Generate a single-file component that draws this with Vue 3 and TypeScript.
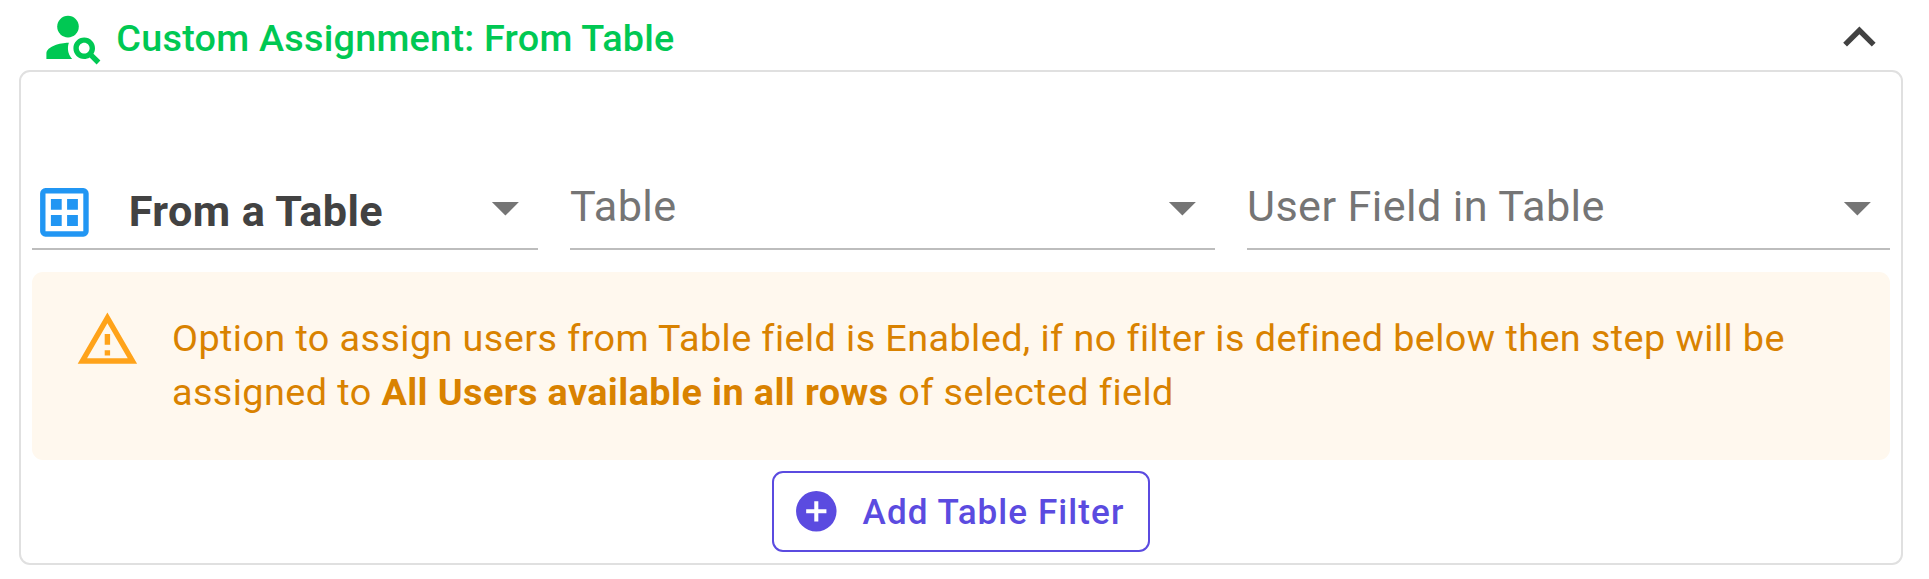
<script setup lang="ts">
interface SelectField {
  id: string
  text: string
  selected: boolean
}

const fields: SelectField[] = [
  { id: 'source', text: 'From a Table', selected: true },
  { id: 'table', text: 'Table', selected: false },
  { id: 'user-field', text: 'User Field in Table', selected: false },
]
</script>

<template>
  <section class="assignment">
    <header class="head">
      <svg class="icon" viewBox="0 0 24 24">
        <circle cx="10" cy="8" r="4" />
        <path d="M10.35 14.01C7.62 13.91 2 15.27 2 18v2h9.54c-2.47-2.76-1.23-5.89-1.19-5.99z" />
        <path d="M19.43 18.02c.36-.59.57-1.28.57-2.02 0-2.21-1.79-4-4-4s-4 1.79-4 4 1.79 4 4 4c.74 0 1.43-.22 2.02-.57L20.59 22 22 20.59l-2.57-2.57zM16 18c-1.1 0-2-.9-2-2s.9-2 2-2 2 .9 2 2-.9 2-2 2z" />
      </svg>
      <h2 class="title">Custom Assignment: From Table</h2>
      <svg class="icon chevron" viewBox="0 0 24 24">
        <path d="M7.41 15.41 12 10.83l4.59 4.58L18 14l-6-6-6 6z" />
      </svg>
    </header>

    <div class="panel">
      <div class="fields">
        <div v-for="field in fields" :key="field.id" class="field" :class="{ selected: field.selected }">
          <svg v-if="field.selected" class="icon table-icon" viewBox="0 0 24 24">
            <path fill-rule="evenodd" d="M5 3h14a2 2 0 0 1 2 2v14a2 2 0 0 1-2 2H5a2 2 0 0 1-2-2V5a2 2 0 0 1 2-2zM5 5v14h14V5z" />
            <path d="M7 7h4v4H7zM13 7h4v4h-4zM7 13h4v4H7zM13 13h4v4h-4z" />
          </svg>
          <span class="value">{{ field.text }}</span>
          <svg class="icon caret" viewBox="0 0 24 24"><path d="M7 10l5 5 5-5z" /></svg>
        </div>
      </div>

      <div class="alert">
        <svg class="icon warn" viewBox="0 0 24 24">
          <path d="M12 5.99 19.53 19H4.47L12 5.99M12 2 1 21h22L12 2zm1 14h-2v2h2v-2zm0-6h-2v4h2v-4z" />
        </svg>
        <p class="message">
          Option to assign users from Table field is Enabled, if no filter is defined below then step will be<br />
          assigned to <b>All Users available in all rows</b> of selected field
        </p>
      </div>

      <button class="add" type="button">
        <svg class="icon plus" viewBox="0 0 24 24">
          <path d="M17 13h-4v4h-2v-4H7v-2h4V7h2v4h4m-5-9a10 10 0 1 0 0 20 10 10 0 0 0 0-20z" />
        </svg>
        <span class="add-text">Add Table Filter</span>
      </button>
    </div>
  </section>
</template>

<style>
body {
  margin: 0;
  background: #fff;
}
</style>

<style scoped>
.assignment {
  box-sizing: border-box;
  width: 1929px;
  height: 579px;
  padding: 0 26px 14px 19px;
  display: flex;
  flex-direction: column;
  background: #fff;
  font-family: Roboto, "Liberation Sans", sans-serif;
}

.icon {
  display: block;
  flex: none;
  width: 64.8px;
  height: 64.8px;
  fill: currentColor;
}

.head {
  box-sizing: border-box;
  height: 70px;
  padding: 5px 11px 0 21.7px;
  display: flex;
  align-items: flex-start;
  color: #00c853;
}

.title {
  flex: 1;
  margin: 0 0 0 10.8px;
  font-size: 37.8px;
  line-height: 66px;
  font-weight: 500;
  letter-spacing: 0.235px;
  white-space: nowrap;
}

.chevron {
  color: #424242;
}

.panel {
  box-sizing: border-box;
  flex: 1;
  padding: 100px 11px 0;
  display: flex;
  flex-direction: column;
  align-items: stretch;
  border: 2px solid #e0e0e0;
  border-radius: 11px;
}

.fields {
  display: grid;
  grid-template-columns: 506px 645px 643px;
  gap: 32px;
}

.field {
  box-sizing: border-box;
  height: 78px;
  display: flex;
  align-items: flex-start;
  border-bottom: 2px solid #bdbdbd;
  color: #757575;
}

.value {
  flex: 1;
  font-size: 43.2px;
  line-height: 70px;
  letter-spacing: 0.405px;
  white-space: nowrap;
}

.selected .value {
  margin: 5px 0 0 32px;
  color: #424242;
  font-weight: 700;
}

.table-icon {
  margin-top: 8px;
  color: #2196f3;
}

.caret {
  margin: 3px 0 0;
}

.alert {
  box-sizing: border-box;
  height: 188px;
  margin-top: 22px;
  padding: 34.6px 0 0 42.8px;
  display: flex;
  align-items: flex-start;
  border-radius: 11px;
  background: #fff8ee;
  color: #d98200;
}

.warn {
  color: #ffa31a;
}

.message {
  margin: 4.4px 0 0 32.4px;
  font-size: 37.8px;
  line-height: 54px;
  letter-spacing: 0.405px;
  white-space: nowrap;
}

.add {
  box-sizing: border-box;
  align-self: center;
  width: 378px;
  height: 81px;
  margin: 11px 0 0;
  padding: 0 0 0 18px;
  display: flex;
  align-items: center;
  border: 2px solid #5b4be0;
  border-radius: 11px;
  background: #fff;
  color: #5b4be0;
  font: 500 35.1px / 50px Roboto, "Liberation Sans", sans-serif;
  letter-spacing: 1.05px;
  white-space: nowrap;
}

.plus {
  width: 48.6px;
  height: 48.6px;
}

.add-text {
  margin-left: 22px;
}
</style>
